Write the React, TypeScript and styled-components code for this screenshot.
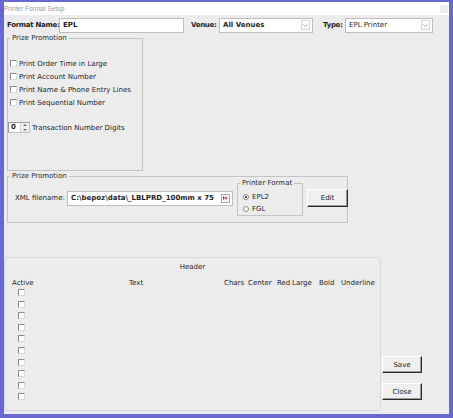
import styled, { createGlobalStyle } from "styled-components";

const GlobalStyle = createGlobalStyle`
  html, body {
    margin: 0;
    padding: 0;
    background: #ececec;
  }
  body {
    font-family: "DejaVu Sans", Verdana, sans-serif;
    font-size: 7px;
    color: #1e1e1e;
  }
  * {
    box-sizing: border-box;
  }
`;

const Window = styled.div`
  width: 453px;
  height: 418px;
  border: 4px solid #6868cf;
  border-top-width: 2px;
  background: #ececec;
  display: flex;
  flex-direction: column;
`;

const TitleBar = styled.div`
  flex: none;
  height: 13px;
  background: #fff;
  display: flex;
  align-items: center;
  justify-content: space-between;
  padding: 0 1px 0 0;
`;

const Title = styled.span`
  font-family: "Liberation Sans", Arial, sans-serif;
  font-size: 6.5px;
  color: #9a9a9a;
`;

const CloseBox = styled.span`
  width: 8px;
  height: 8px;
  margin-top: 1px;
  background: #ececec;
`;

const Body = styled.div`
  flex: 1;
  min-height: 0;
  display: flex;
  flex-direction: column;
`;

const TopRow = styled.div`
  display: flex;
  align-items: center;
  height: 16px;
  margin-top: 2px;
  padding-left: 3px;
`;

const BoldLabel = styled.label<{ $w: number; $ml?: number }>`
  width: ${({ $w }) => $w}px;
  margin-left: ${({ $ml }) => $ml ?? 0}px;
  font-weight: bold;
  letter-spacing: -0.3px;
  white-space: nowrap;
`;

const TextBox = styled.div<{ $w: number; $bold?: boolean }>`
  width: ${({ $w }) => $w}px;
  height: 15px;
  flex: none;
  display: flex;
  align-items: center;
  padding: 0 2px 0 3px;
  background: #fff;
  border: 1px solid #bdbdbd;
  font-weight: ${({ $bold }) => ($bold ? "bold" : "normal")};
  white-space: nowrap;
  overflow: hidden;
`;

const BoxText = styled.span`
  flex: 1;
  overflow: hidden;
`;

const DropArrow = styled.span`
  flex: none;
  width: 9px;
  height: 10px;
  margin-left: auto;
  display: flex;
  align-items: center;
  justify-content: center;
  background: #fff;
  border: 1px solid #d4d4d4;
`;

const Group = styled.fieldset<{ $w: number; $h?: number; $mt?: number; $ml?: number }>`
  margin: ${({ $mt }) => $mt ?? 0}px 0 0 ${({ $ml }) => $ml ?? 3}px;
  width: ${({ $w }) => $w}px;
  ${({ $h }) => ($h ? `height: ${$h}px;` : "")}
  flex: none;
  min-width: 0;
  padding: 0;
  border: 1px solid #c4c4c4;
`;

const Legend = styled.legend<{ $lh: number }>`
  margin-left: 2px;
  padding: 0 2px;
  line-height: ${({ $lh }) => $lh}px;
  color: #2a2a2a;
  white-space: nowrap;
`;

const OptionList = styled.div`
  display: flex;
  flex-direction: column;
  padding: 14px 0 0 2px;
`;

const CheckRow = styled.label`
  display: flex;
  align-items: center;
  gap: 2px;
  height: 13px;
  white-space: nowrap;
`;

const Check = styled.span`
  display: block;
  flex: none;
  width: 7px;
  height: 7px;
  background: #fff;
  border-top: 1px solid #8a8a8a;
  border-left: 1px solid #8a8a8a;
  border-right: 1px solid #dadada;
  border-bottom: 1px solid #dadada;
`;

const SpinRow = styled.div`
  display: flex;
  align-items: center;
  gap: 2px;
  margin: 13px 0 0 -2px;
  white-space: nowrap;
`;

const Spinner = styled.div`
  display: flex;
  width: 22px;
  height: 11px;
  border: 1px solid #c2c2c2;
  border-top-color: #9a9a9a;
  border-left-color: #9a9a9a;
  background: #fff;
`;

const SpinValue = styled.span`
  flex: 1;
  padding-left: 2px;
  font-weight: bold;
  line-height: 9px;
`;

const SpinArrows = styled.span`
  width: 9px;
  display: flex;
  flex-direction: column;
  justify-content: space-around;
  align-items: center;
  background: #f0f0f0;
  border-left: 1px solid #d0d0d0;
`;

const FileRow = styled.div`
  display: flex;
  align-items: center;
  padding: 0 0 6px 7px;
`;

const PlainLabel = styled.span<{ $w: number }>`
  width: ${({ $w }) => $w}px;
  flex: none;
  white-space: nowrap;
`;

const BrowseButton = styled.span`
  flex: none;
  width: 9px;
  height: 9px;
  margin-left: 2px;
  display: flex;
  align-items: center;
  justify-content: center;
  background: #f6f6f6;
  border: 1px solid #a8a8a8;
`;

const RadioList = styled.div`
  display: flex;
  flex-direction: column;
  padding: 4px 0 0 5px;
`;

const RadioRow = styled.label`
  display: flex;
  align-items: center;
  gap: 3px;
  height: 12px;
`;

const Radio = styled.span<{ $checked?: boolean }>`
  position: relative;
  flex: none;
  width: 6px;
  height: 6px;
  border-radius: 50%;
  background: #fff;
  border: 1px solid #8a8a8a;

  &::after {
    content: "";
    display: ${({ $checked }) => ($checked ? "block" : "none")};
    position: absolute;
    left: 1px;
    top: 1px;
    width: 2px;
    height: 2px;
    border-radius: 50%;
    background: #222;
  }
`;

const PushButton = styled.button<{ $w: number; $h: number; $ml?: number }>`
  width: ${({ $w }) => $w}px;
  height: ${({ $h }) => $h}px;
  margin: 0 0 0 ${({ $ml }) => $ml ?? 0}px;
  padding: 0;
  flex: none;
  font: inherit;
  color: #222;
  background: #efefef;
  border-top: 1px solid #fff;
  border-left: 1px solid #fff;
  border-right: 1px solid #2a2a2a;
  border-bottom: 1px solid #2a2a2a;
  box-shadow: inset -1px -1px 0 #9a9a9a;
`;

const Bottom = styled.div`
  margin-top: auto;
  margin-bottom: 3px;
  display: flex;
  align-items: flex-end;
`;

const HeaderPanel = styled.div`
  width: 377px;
  height: 154px;
  display: flex;
  flex-direction: column;
  border: 1px solid #d3dada;
  border-radius: 3px;
`;

const PanelTitle = styled.div`
  margin-top: 4px;
  line-height: 10px;
  text-align: center;
`;

const ColumnHeads = styled.div`
  display: grid;
  grid-template-columns: 117px 95px 24px 29px 15px 27px 22px auto;
  margin-top: 6px;
  padding-left: 7px;
  line-height: 10px;
  white-space: nowrap;
`;

const ActiveList = styled.div`
  display: flex;
  flex-direction: column;
  padding: 1px 0 0 13px;
`;

const ActiveRow = styled.div`
  display: flex;
  align-items: flex-start;
  height: 11.6px;
`;

const ButtonColumn = styled.div`
  display: flex;
  flex-direction: column;
  gap: 10px;
  margin: 0 0 11px 1px;
`;

const Chevron = () => (
  <svg width="5" height="3" viewBox="0 0 5 3">
    <path d="M0.5 0.5 L2.5 2.5 L4.5 0.5" fill="none" stroke="#8a8a8a" strokeWidth="0.8" />
  </svg>
);

const SpinTriangle = ({ up }: { up?: boolean }) => (
  <svg width="4" height="2" viewBox="0 0 4 2">
    <path d={up ? "M0 2 L2 0 L4 2 Z" : "M0 0 L2 2 L4 0 Z"} fill="#6a6a6a" />
  </svg>
);

const BrowseArrows = () => (
  <svg width="5" height="4" viewBox="0 0 5 4">
    <path d="M0 0 L2 2 L0 4 Z M2.5 0 L4.5 2 L2.5 4 Z" fill="#b0207a" />
  </svg>
);

const options = [
  "Print Order Time in Large",
  "Print Account Number",
  "Print Name & Phone Entry Lines",
  "Print Sequential Number",
];

const columns = ["Active", "Text", "Chars", "Center", "Red", "Large", "Bold", "Underline"];

const activeRows = Array.from({ length: 10 }, (_, i) => i);

const App = () => (
  <>
    <GlobalStyle />
    <Window>
      <TitleBar>
        <Title>Printer Format Setup</Title>
        <CloseBox />
      </TitleBar>
      <Body>
        <TopRow>
          <BoldLabel $w={52}>Format Name:</BoldLabel>
          <TextBox $w={125} $bold>
            <BoxText>EPL</BoxText>
          </TextBox>
          <BoldLabel $w={28} $ml={7}>
            Venue:
          </BoldLabel>
          <TextBox $w={94} $bold>
            <BoxText>All Venues</BoxText>
            <DropArrow>
              <Chevron />
            </DropArrow>
          </TextBox>
          <BoldLabel $w={22} $ml={10}>
            Type:
          </BoldLabel>
          <TextBox $w={88}>
            <BoxText>EPL Printer</BoxText>
            <DropArrow>
              <Chevron />
            </DropArrow>
          </TextBox>
        </TopRow>

        <Group $w={136} $h={137} $mt={1}>
          <Legend $lh={9}>Prize Promotion</Legend>
          <OptionList>
            {options.map((label) => (
              <CheckRow key={label}>
                <Check />
                {label}
              </CheckRow>
            ))}
            <SpinRow>
              <Spinner>
                <SpinValue>0</SpinValue>
                <SpinArrows>
                  <SpinTriangle up />
                  <SpinTriangle />
                </SpinArrows>
              </Spinner>
              Transaction Number Digits
            </SpinRow>
          </OptionList>
        </Group>

        <Group $w={341} $mt={1}>
          <Legend $lh={8}>Prize Promotion</Legend>
          <FileRow>
            <PlainLabel $w={52}>XML filename:</PlainLabel>
            <TextBox $w={166} $bold>
              <BoxText>C:\bepoz\data\_LBLPRD_100mm x 75</BoxText>
              <BrowseButton>
                <BrowseArrows />
              </BrowseButton>
            </TextBox>
            <Group $w={66} $h={36} $ml={4}>
              <Legend $lh={7}>Printer Format</Legend>
              <RadioList>
                <RadioRow>
                  <Radio $checked />
                  EPL2
                </RadioRow>
                <RadioRow>
                  <Radio />
                  FGL
                </RadioRow>
              </RadioList>
            </Group>
            <PushButton $w={41} $h={18} $ml={4}>
              Edit
            </PushButton>
          </FileRow>
        </Group>

        <Bottom>
          <HeaderPanel>
            <PanelTitle>Header</PanelTitle>
            <ColumnHeads>
              {columns.map((c) => (
                <span key={c}>{c}</span>
              ))}
            </ColumnHeads>
            <ActiveList>
              {activeRows.map((i) => (
                <ActiveRow key={i}>
                  <Check />
                </ActiveRow>
              ))}
            </ActiveList>
          </HeaderPanel>
          <ButtonColumn>
            <PushButton $w={40} $h={17}>
              Save
            </PushButton>
            <PushButton $w={40} $h={17}>
              Close
            </PushButton>
          </ButtonColumn>
        </Bottom>
      </Body>
    </Window>
  </>
);

export default App;
